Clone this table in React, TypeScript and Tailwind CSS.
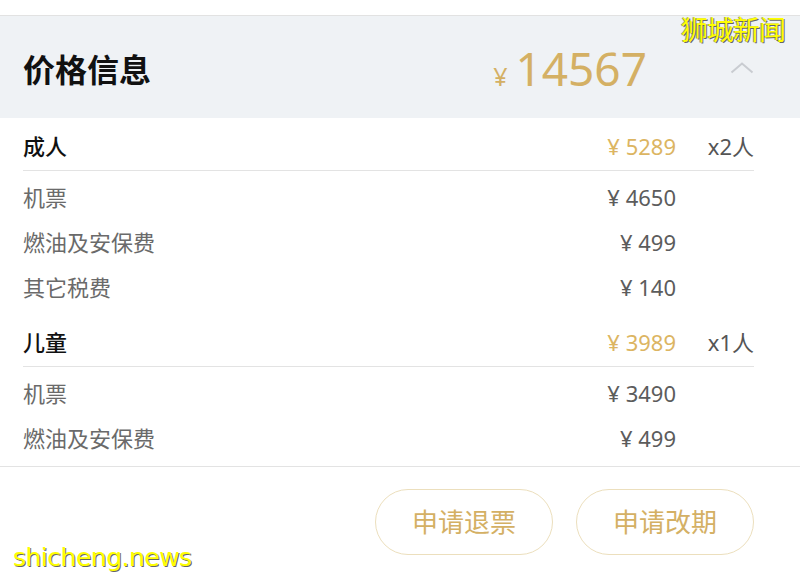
const FONT = "font-['Noto_Sans','Noto_Sans_CJK_SC',sans-serif]";

type Item = { label: string; price: number };
type Group = { title: string; total: number; count: number; items: Item[] };

const groups: Group[] = [
  {
    title: '成人',
    total: 5289,
    count: 2,
    items: [
      { label: '机票', price: 4650 },
      { label: '燃油及安保费', price: 499 },
      { label: '其它税费', price: 140 },
    ],
  },
  {
    title: '儿童',
    total: 3989,
    count: 1,
    items: [
      { label: '机票', price: 3490 },
      { label: '燃油及安保费', price: 499 },
    ],
  },
];

function PriceGroup({ group, first }: { group: Group; first: boolean }) {
  return (
    <div className={first ? '' : 'mt-2'}>
      <div className="flex h-[49px] items-center border-b border-[#e3e3e3] text-[22px]">
        <span className="flex-1 font-medium text-[#111]">{group.title}</span>
        <span className="text-[#dcb562]">¥ {group.total}</span>
        <span className="ml-[31px] w-[47px] text-right text-[#555]">x{group.count}人</span>
      </div>
      <div className="pt-1">
        {group.items.map((it) => (
          <div key={it.label} className="flex h-[45px] items-center text-[22px]">
            <span className="flex-1 text-[#6a6a6a]">{it.label}</span>
            <span className="text-[#5c5c5c]">¥ {it.price}</span>
            <span className="ml-[31px] w-[47px]" />
          </div>
        ))}
      </div>
    </div>
  );
}

export default function App() {
  return (
    <div className={`relative h-[576px] w-[800px] overflow-hidden bg-white ${FONT}`}>
      <div className="h-[16px] border-b border-[#e2e2e2]" />
      <div className="flex h-[102px] items-center bg-[#eff2f5] pl-[23px] pr-[46px] pt-[6px]">
        <h2 className="flex-1 text-[32px] font-bold text-[#111]">价格信息</h2>
        <div className="flex items-baseline text-[#d4b064]">
          <span className="mr-2 text-[25px]">¥</span>
          <span className="text-[46px] leading-none">14567</span>
        </div>
        <svg width="24" height="12" viewBox="0 0 24 12" className="mb-1 ml-[83px]" fill="none">
          <path d="M1.5 10.5 L12 1.5 L22.5 10.5" stroke="#c9ccd1" strokeWidth="2" />
        </svg>
      </div>
      <div className="pl-[23px] pr-[46px] pt-1 pb-[5px]">
        {groups.map((g, i) => (
          <PriceGroup key={g.title} group={g} first={i === 0} />
        ))}
      </div>
      <div className="flex justify-end gap-[23px] border-t border-[#e3e3e3] pr-[46px] pt-[22px]">
        <button className="h-[66px] w-[178px] rounded-full border border-[#ecdfbd] text-[26px] text-[#d4b064]">
          申请退票
        </button>
        <button className="h-[66px] w-[178px] rounded-full border border-[#ecdfbd] text-[26px] text-[#d4b064]">
          申请改期
        </button>
      </div>

      <div className="absolute right-[15px] top-[16px] text-[27px] leading-none tracking-[-1px] text-[#ffff00] [text-shadow:1px_1px_0_#666,-1px_0_0_#999]">
        狮城新闻
      </div>
      <div className="absolute bottom-[6px] left-[13px] font-['DejaVu_Sans',sans-serif] text-[25px] leading-none tracking-[-0.5px] text-[#ffff00] [text-shadow:1px_1px_0_#666]">
        shicheng.news
      </div>
    </div>
  );
}
